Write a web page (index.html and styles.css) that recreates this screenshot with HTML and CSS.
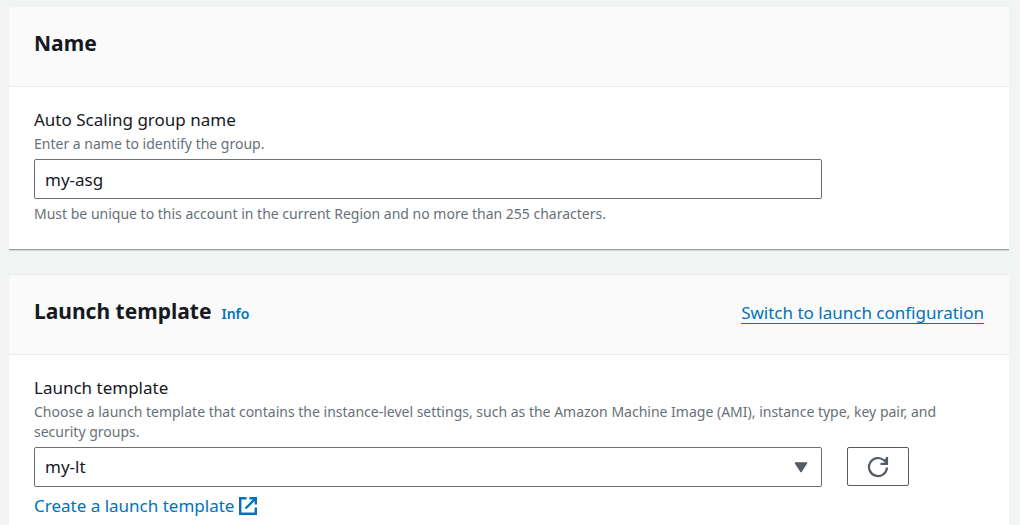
FILE: index.html
```html
<!DOCTYPE html>
<html lang="en">
<head>
  <meta charset="UTF-8">
  <meta name="viewport" content="width=device-width, initial-scale=1.0">
  <title>Create Auto Scaling group</title>
  <link rel="stylesheet" href="styles.css">
</head>
<body>

  <section class="card">
    <div class="card-header">
      <h2>Name</h2>
    </div>
    <div class="card-body">
      <label class="field-label" for="groupName">Auto Scaling group name</label>
      <p class="hint" id="groupHint">Enter a name to identify the group.</p>
      <div class="field-row">
        <input type="text" id="groupName" class="control" value="my-asg" aria-describedby="groupHint groupRule">
      </div>
      <p class="hint constraint" id="groupRule">Must be unique to this account in the current Region and no more than 255 characters.</p>
    </div>
  </section>

  <section class="card">
    <div class="card-header">
      <div class="title">
        <h2>Launch template</h2>
        <a href="#" class="info-link">Info</a>
      </div>
      <a href="#" class="switch-link">Switch to launch configuration</a>
    </div>
    <div class="card-body">
      <label class="field-label" for="template">Launch template</label>
      <p class="hint" id="templateHint">Choose a launch template that contains the instance-level settings, such as the Amazon Machine Image (AMI), instance type, key pair, and security groups.</p>
      <div class="field-row">
        <div class="select-wrap">
          <select id="template" class="control" aria-describedby="templateHint">
            <option>my-lt</option>
          </select>
          <svg class="caret" width="14" height="11" viewBox="0 0 14 11" aria-hidden="true">
            <path d="M1.5 1h11L7 9.5z" fill="#545b64" stroke="#545b64" stroke-width="1.5" stroke-linejoin="round"/>
          </svg>
        </div>
        <button type="button" class="refresh-button" aria-label="Refresh">
          <svg width="22" height="22" viewBox="0 0 22 22" fill="none" stroke="#545b64" stroke-width="2.2" aria-hidden="true">
            <path d="M20 11.5a9 9 0 1 1-3-7.2L19.6 7"/>
            <path d="M20 1v6.8H13.5"/>
            <path d="M16.2 4.2L20 1.8V7.8z" fill="#545b64" stroke="none"/>
          </svg>
        </button>
      </div>
      <a href="#" class="create-link">Create a launch template
        <svg width="18" height="18" viewBox="0 0 18 18" fill="none" stroke="#0073bb" stroke-width="2.4" aria-hidden="true">
          <path d="M7.5 1.2H1.2v15.6h15.6v-6.3"/>
          <path d="M10.5 1.2h6.3v6.3M16.5 1.5L6.5 11.5"/>
        </svg>
      </a>
    </div>
  </section>

</body>
</html>
```
FILE: styles.css
```css
* {
  box-sizing: border-box;
}

body {
  margin: 7px 11px 0 9px;
  background-color: #f2f3f3;
  color: #16191f;
  font-family: "Noto Sans", sans-serif;
  font-size: 17px;
  line-height: 24px;
}

h2 {
  margin: 0;
  font-size: 21px;
  line-height: 28px;
  font-weight: 700;
}

p {
  margin: 0;
}

a {
  color: #0073bb;
  text-decoration: none;
}

.card {
  margin-bottom: 26px;
  background-color: #fff;
  box-shadow: 0 1px 0 #95a0a2, 1px 0 0 #c8cdce, -1px 0 0 #c8cdce, 0 -1px 0 #eaeded, 0 2px 0 #d5d9da;
}

.card-header {
  display: flex;
  justify-content: space-between;
  align-items: baseline;
  height: 80px;
  padding: 22px 25px 0;
  background-color: #fafafa;
  border-bottom: 1px solid #eaeded;
}

.title {
  display: flex;
  align-items: baseline;
  gap: 10px;
}

.info-link {
  font-size: 14px;
  font-weight: 600;
}

.switch-link {
  line-height: 20px;
  border-bottom: 1px solid #0073bb;
}

.card-body {
  padding: 21px 25px 25px;
}

.field-label {
  display: block;
  margin-bottom: 2px;
}

.hint {
  margin-bottom: 5px;
  color: #687078;
  font-size: 14px;
  line-height: 20px;
}

.constraint {
  margin: 5px 0 0;
}

.field-row {
  display: grid;
  grid-template-columns: repeat(12, minmax(0, 1fr));
  column-gap: 25px;
}

.control {
  grid-column: span 10;
  width: 100%;
  height: 40px;
  padding: 0 10px;
  border: 1px solid #687078;
  border-radius: 2px;
  background-color: #fff;
  color: #16191f;
  font: inherit;
  appearance: none;
}

.select-wrap {
  position: relative;
  grid-column: span 10;
}

.caret {
  position: absolute;
  right: 14px;
  top: 15px;
  pointer-events: none;
}

.refresh-button {
  display: flex;
  justify-content: center;
  align-items: center;
  width: 62px;
  height: 39px;
  padding: 0;
  border: 1px solid #545b64;
  border-radius: 2px;
  background-color: #fff;
  cursor: pointer;
}

.create-link {
  display: inline-flex;
  align-items: center;
  gap: 5px;
  margin-top: 7px;
}
```
